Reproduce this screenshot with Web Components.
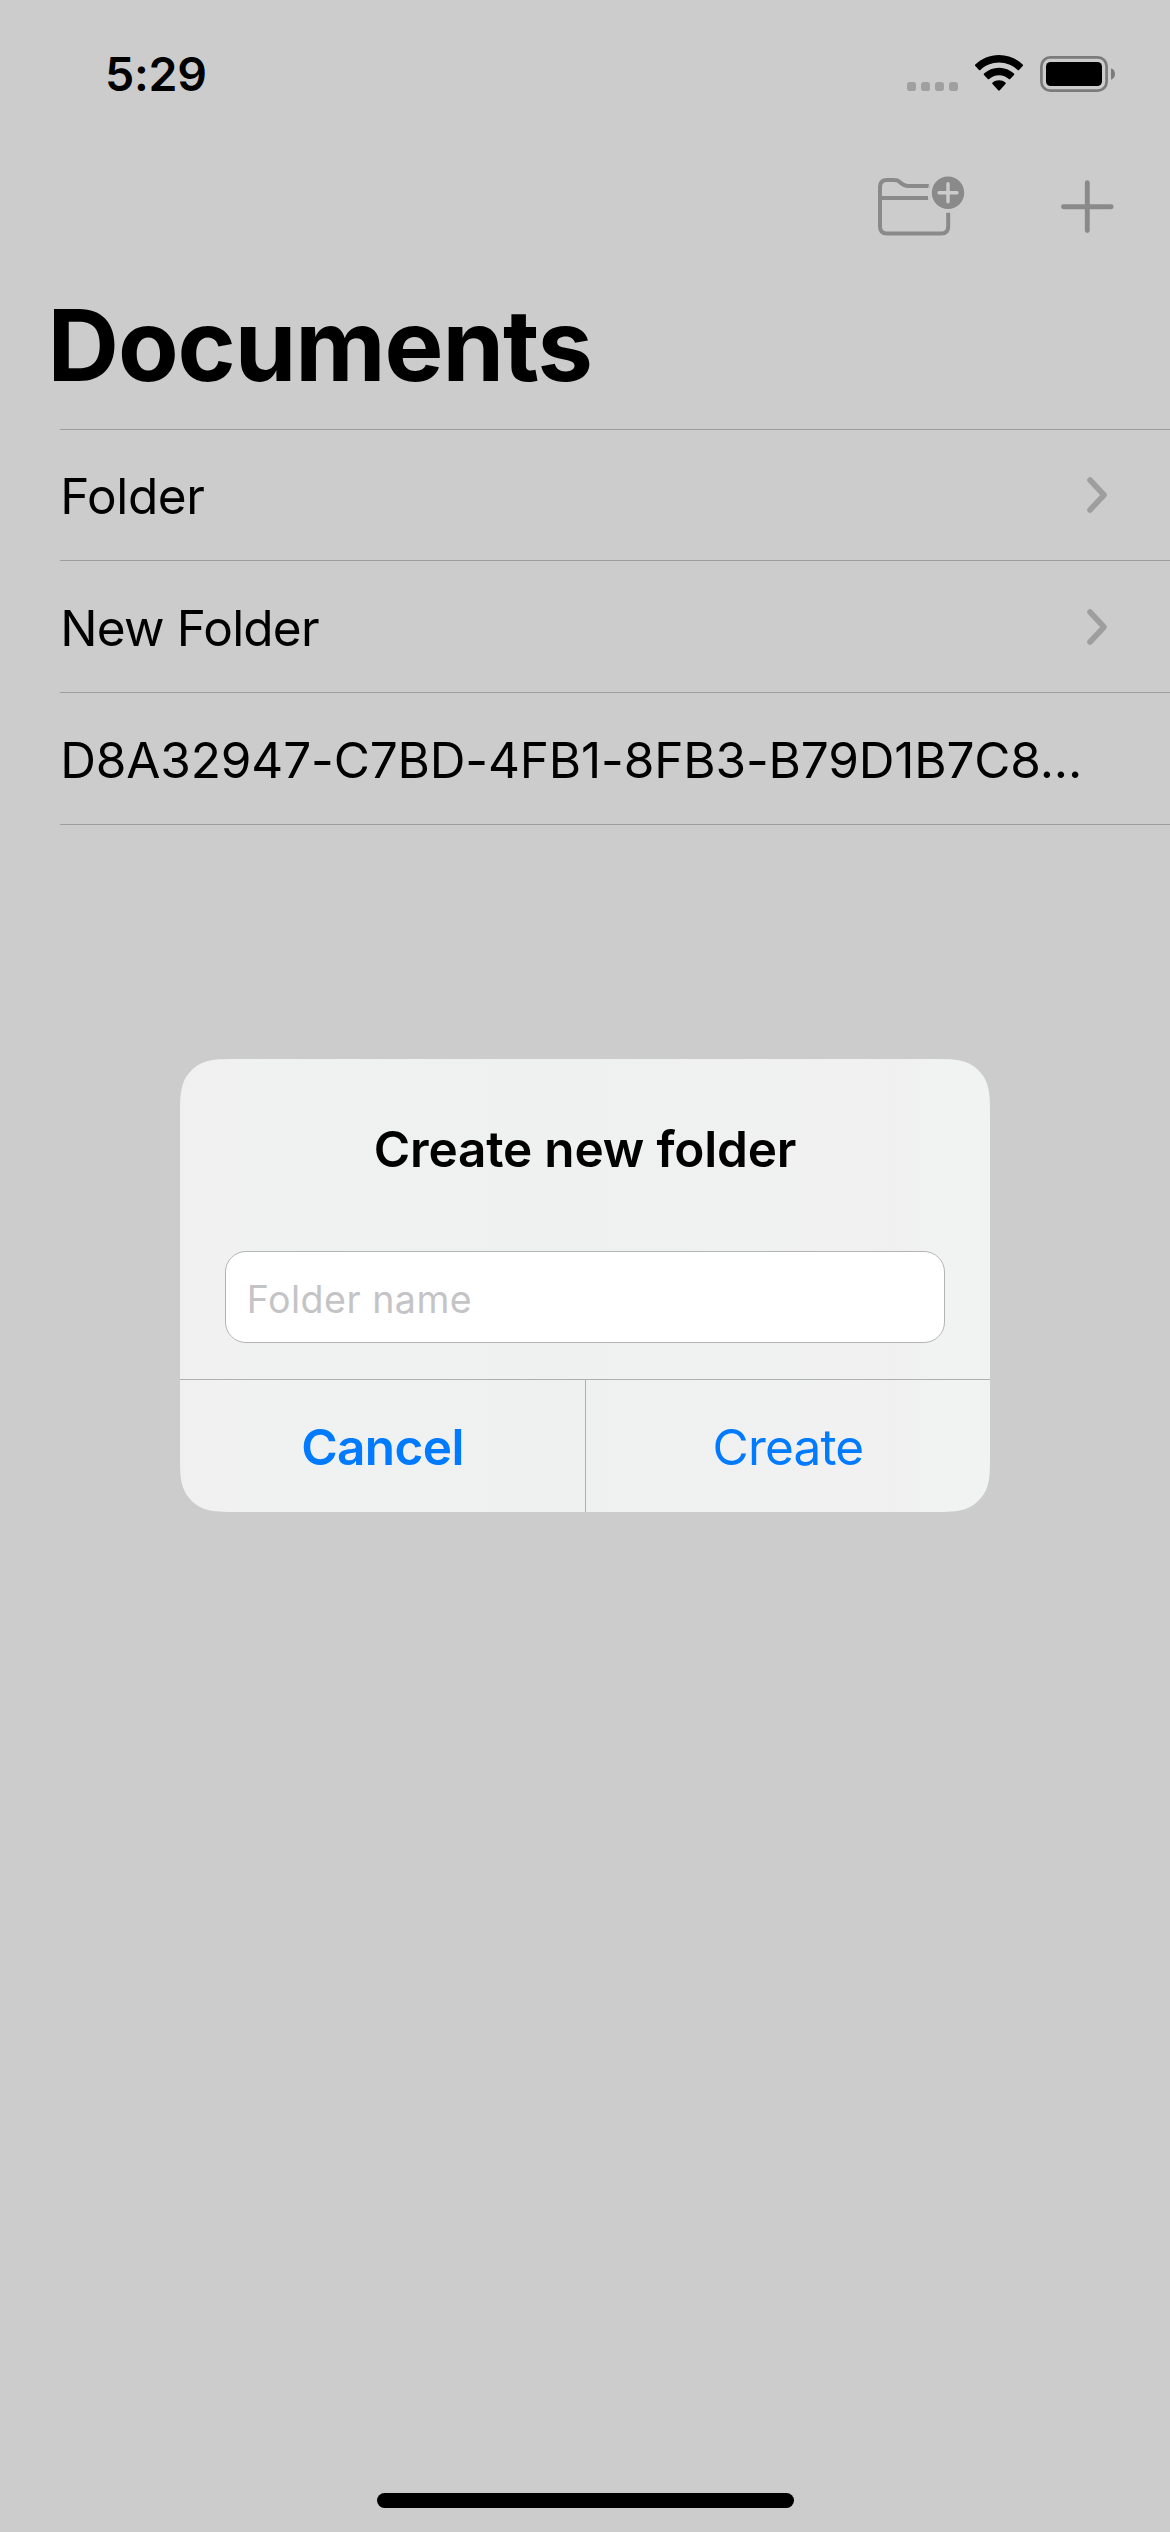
<!DOCTYPE html>
<html lang="en">
<head>
<meta charset="utf-8">
<title>Documents</title>
<style>
  html, body { margin: 0; padding: 0; }
  body { background: #ccc; font-family: Inter, "Liberation Sans", sans-serif; color: #000; }
</style>
</head>
<body>
<app-screen>
  <status-bar slot="status">5:29</status-bar>
  <nav-bar slot="nav"></nav-bar>
  <large-title slot="title">Documents</large-title>
  <doc-list slot="content">
    <doc-row folder style="--tracking:-0.45px">Folder</doc-row>
    <doc-row folder style="--tracking:-0.8px">New Folder</doc-row>
    <doc-row style="--tracking:-0.15px">D8A32947-C7BD-4FB1-8FB3-B79D1B7C8...</doc-row>
  </doc-list>
  <alert-dialog slot="overlay">
    <span slot="title">Create new folder</span>
    <text-field slot="field">Folder name</text-field>
    <alert-button slot="actions" bold>Cancel</alert-button>
    <alert-button slot="actions">Create</alert-button>
  </alert-dialog>
</app-screen>

<script>
const define = (name, html, init) => {
  const template = document.createElement('template');
  template.innerHTML = html;
  customElements.define(name, class extends HTMLElement {
    constructor() {
      super();
      this.attachShadow({ mode: 'open' }).append(template.content.cloneNode(true));
      if (init) init(this);
    }
  });
};

define('app-screen', `
  <style>
    :host { display: flex; flex-direction: column; position: relative; width: 1170px; height: 2532px; background: #ccc; overflow: hidden; }
    .overlay { position: absolute; inset: 0; display: flex; justify-content: center; align-items: flex-start; padding-top: 1059px; box-sizing: border-box; }
    .home { margin: auto auto 24px; width: 417px; height: 15px; border-radius: 8px; background: #000; }
  </style>
  <slot name="status"></slot>
  <slot name="nav"></slot>
  <slot name="title"></slot>
  <slot name="content"></slot>
  <div class="home"></div>
  <div class="overlay"><slot name="overlay"></slot></div>
`);

define('status-bar', `
  <style>
    :host { display: flex; justify-content: space-between; height: 141px; padding: 0 55px 0 105px; }
    .time { margin-top: 41px; line-height: 66px; font-size: 46.5px; font-weight: 600; letter-spacing: -0.3px; }
    svg { display: block; }
  </style>
  <div class="time"><slot></slot></div>
  <svg width="208" height="141" viewBox="907 0 208 141">
    <g fill="#a0a0a0">
      <rect x="907" y="82" width="9" height="9" rx="2.8"/>
      <rect x="921" y="82" width="9" height="9" rx="2.8"/>
      <rect x="935" y="82" width="9" height="9" rx="2.8"/>
      <rect x="949" y="82" width="9" height="9" rx="2.8"/>
    </g>
    <path d="M999 55C989.8 55 981.5 58.6 975.3 64.6Q974.6 65.3 975.3 66L979 70Q979.7 70.7 980.4 70C985.3 65.4 991.8 62.600 999 62.600S1012.700 65.400 1017.600 70Q1018.300 70.700 1019 70L1022.700 66Q1023.400 65.300 1022.700 64.600C1016.500 58.600 1008.200 55 999 55Z"/>
    <path d="M999 67.700C993.200 67.700 988 69.900 984 73.500Q983.300 74.200 984 74.900L987.800 78.900Q988.500 79.600 989.200 78.900C991.800 76.600 995.200 75.200 999 75.200S1006.200 76.600 1008.800 78.900Q1009.500 79.600 1010.200 78.900L1014 74.900Q1014.700 74.200 1014 73.500C1010 69.900 1004.800 67.700 999 67.700Z"/>
    <path d="M999 80.300C996.500 80.300 994.400 81.100 992.600 82.500Q991.800 83.300 992.500 84L998.200 90.300Q999 91.200 999.800 90.300L1005.500 84Q1006.200 83.300 1005.400 82.500C1003.600 81.100 1001.500 80.300 999 80.300Z"/>
    <rect x="1041.400" y="57.400" width="65.200" height="33.200" rx="8.800" fill="none" stroke="#7b7b7b" stroke-width="2.700"/>
    <rect x="1046" y="62" width="56" height="24" rx="4.600"/>
    <path d="M1111 68.300C1113.600 69.300 1115 71.500 1115 74S1113.600 78.700 1111 79.700Z" fill="#7b7b7b"/>
  </svg>
`);

define('nav-bar', `
  <style>
    :host { display: flex; justify-content: flex-end; gap: 88px; height: 132px; padding-right: 52px; }
    svg { display: block; }
  </style>
  <svg width="100" height="132" viewBox="870 141 100 132" fill="none" stroke="#8a8a8a">
    <g stroke-width="4">
      <path d="M929.5 186H908C903.500 186 902.500 184.500 900 182.300S897 180 893.500 180H887Q880 180 880 187V226.500Q880 233.500 887 233.500H941.200Q948.200 233.500 948.200 226.500V212.800"/>
      <path d="M880 198H928.300"/>
    </g>
    <path d="M929.600 183L928.600 188.500M928.100 195L929.300 200.500" stroke="#ccc" stroke-width="1"/>
    <circle cx="948" cy="192.700" r="16.200" fill="#8a8a8a" stroke="none"/>
    <path d="M939 192.700H957M948 183.700V201.700" stroke="#ccc" stroke-width="3.400" stroke-linecap="round"/>
  </svg>
  <svg width="60" height="132" viewBox="1058 141 60 132">
    <path d="M1063.500 206.700H1111.200M1087.300 182.800V230.600" stroke="#8a8a8a" stroke-width="4.900" stroke-linecap="round"/>
  </svg>
`);

define('large-title', `
  <style>
    :host { display: block; height: 156px; padding-left: 47.5px; line-height: 144px; font-size: 99px; font-weight: 700; letter-spacing: -1.08px; }
  </style>
  <slot></slot>
`);

define('doc-list', `
  <style>
    :host { display: flex; flex-direction: column; }
    .top { height: 1px; margin-left: 60px; background: #9e9e9f; }
  </style>
  <div class="top"></div>
  <slot></slot>
`);

define('doc-row', `
  <style>
    :host { display: flex; justify-content: space-between; height: 131px; margin-left: 60px; padding-right: 60px; border-bottom: 1px solid #9e9e9f; font-size: 49.5px; line-height: 134px; letter-spacing: var(--tracking); white-space: nowrap; }
    :host(:first-of-type) { height: 130px; line-height: 132px; }
    .label { padding-left: .3px; }
    svg { display: none; margin-top: 45px; }
    :host([folder]) svg { display: block; }
    :host(:first-of-type) svg { margin-top: 44px; }
  </style>
  <span class="label"><slot></slot></span>
  <svg width="26" height="42" viewBox="0 0 26 42">
    <path d="M6 6L20 21L6 36" fill="none" stroke="#9e9e9e" stroke-width="5.6" stroke-linecap="round" stroke-linejoin="round"/>
  </svg>
`);

/* Rounded rectangle whose corners ease into the straight edges. */
const smoothRect = (w, h, r) => {
  const curves = [
    [[1.0885, 0], [0.8684, 0], [0.6315, 0.0749]],
    [[0.3728, 0.1691], [0.1691, 0.3728], [0.0749, 0.6315]],
    [[0, 0.8684], [0, 1.0885], [0, 1.5287]]
  ];
  const k = 1.5287 * r;
  const corner = map => curves.map(c =>
    'C' + c.map(([a, b]) => map(a * r, b * r).map(n => n.toFixed(2)).join(' ')).join(' ')).join('');
  return `M${k} 0H${w - k}` + corner((a, b) => [w - a, b]) +
    `V${h - k}` + corner((a, b) => [w - b, h - a]) +
    `H${k}` + corner((a, b) => [a, h - b]) +
    `V${k}` + corner((a, b) => [b, a]) + 'Z';
};

define('alert-dialog', `
  <style>
    :host { display: flex; flex-direction: column; width: 810px; height: 453px; background: linear-gradient(90deg, #f1f0f0 0, #f0f2f1 10%, #eff1f0 45%, #f0f1f0 84%, #f0f0f0 88%, #f1f3f2 95%); clip-path: path("${smoothRect(810, 453, 39)}"); }
    .title { height: 192px; line-height: 180px; text-align: center; font-size: 49.5px; font-weight: 600; letter-spacing: -0.2px; }
    .field { height: 92px; padding: 0 45px; }
    .actions { display: flex; height: 132px; margin-top: 36px; border-top: 1px solid #aeb0b0; }
    ::slotted(alert-button:first-of-type) { flex: 0 0 405px; border-right: 1px solid #aeb0b0; }
  </style>
  <div class="title"><slot name="title"></slot></div>
  <div class="field"><slot name="field"></slot></div>
  <div class="actions"><slot name="actions"></slot></div>
`);

define('text-field', `
  <style>
    :host { display: block; box-sizing: border-box; height: 92px; padding-left: 20.7px; border: 1px solid #b3b5b5; border-radius: 21px; background: #fff; color: #c4c4c6; font-size: 37.6px; line-height: 95px; letter-spacing: 0.5px; }
  </style>
  <slot></slot>
`);

define('alert-button', `
  <style>
    :host { display: block; flex: 1; height: 132px; text-align: center; color: #007aff; font-size: 49.5px; line-height: 134px; letter-spacing: -0.8px; }
    :host([bold]) { font-weight: 600; letter-spacing: -0.6px; }
  </style>
  <slot></slot>
`);
</script>
</body>
</html>
